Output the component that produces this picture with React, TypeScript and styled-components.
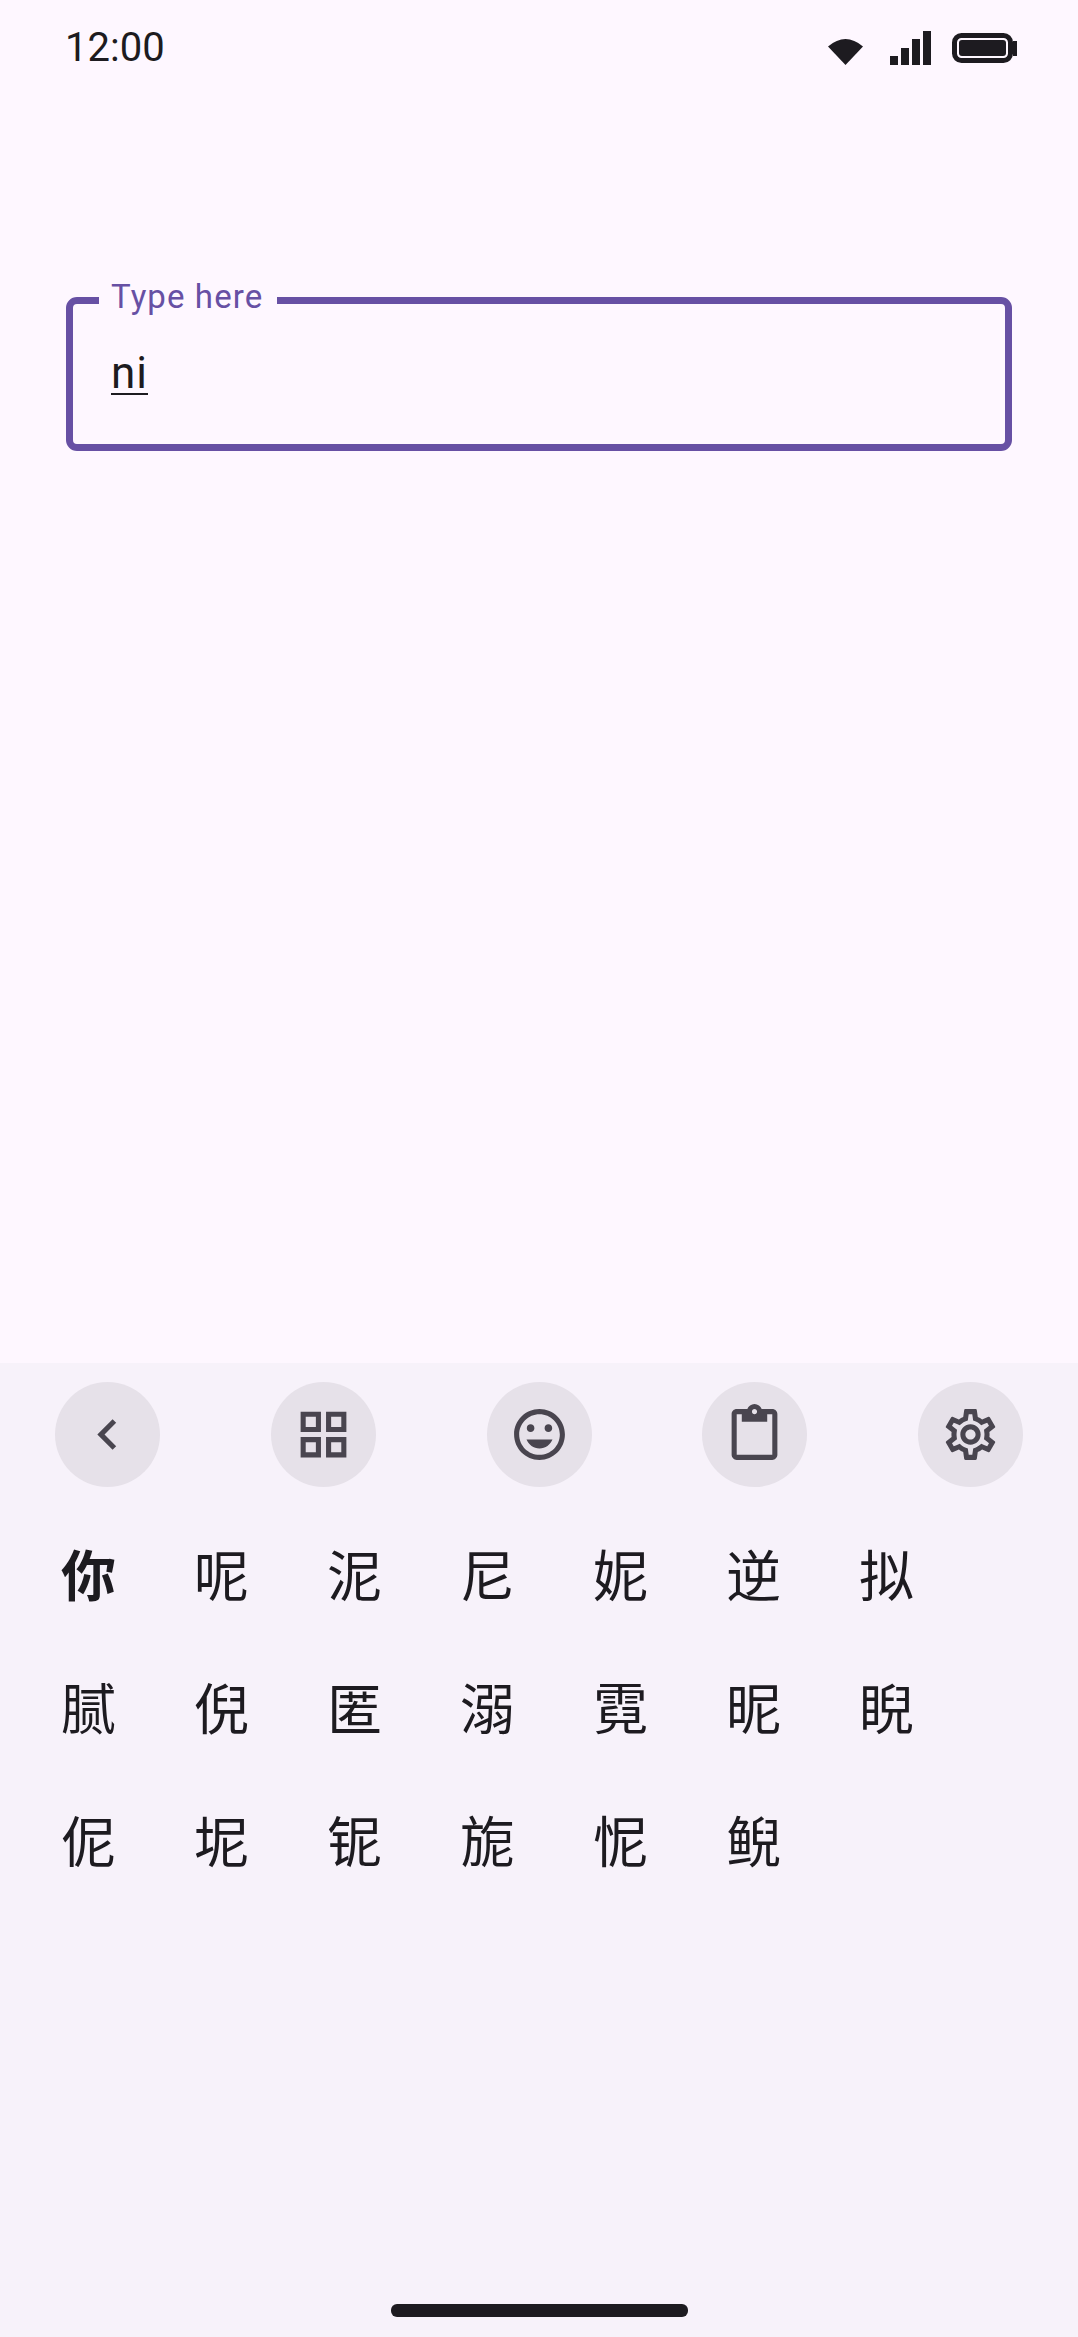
import React from "react";
import styled, { createGlobalStyle } from "styled-components";

const GlobalStyle = createGlobalStyle`
  html, body {
    margin: 0;
    padding: 0;
    background: #fef7ff;
  }
  * {
    box-sizing: border-box;
  }
`;

const Screen = styled.div`
  width: 1078px;
  height: 2337px;
  display: flex;
  flex-direction: column;
  background: #fef7ff;
  color: #1d1b20;
  font-family: Roboto, "Noto Sans CJK SC", sans-serif;
  overflow: hidden;
`;

const StatusBar = styled.div`
  height: 95px;
  padding: 0 61px 0 65px;
  display: flex;
  align-items: center;
  justify-content: space-between;
`;

const Clock = styled.span`
  font-size: 40px;
  line-height: 46px;
`;

const StatusIcons = styled.div`
  display: flex;
  align-items: center;
  color: #1d1b20;

  svg {
    display: block;
    fill: currentColor;
  }
`;

const WifiIcon = styled.svg`
  margin-right: 27px;
`;

const SignalIcon = styled.svg`
  margin-right: 21px;
`;

const Main = styled.main`
  flex: 1;
  padding: 182px 66px 0;
`;

const Field = styled.fieldset`
  width: 946px;
  height: 174px;
  margin: 0;
  padding: 0;
  border: 7px solid #6750a4;
  border-radius: 11px;
`;

const Label = styled.legend`
  margin-left: 26px;
  padding: 0 14px 6px 12px;
  color: #6750a4;
  font-size: 33px;
  line-height: 40px;
  letter-spacing: 1.1px;
`;

const Composing = styled.span`
  display: inline-block;
  margin: 20px 0 0 38px;
  font-size: 44px;
  line-height: 60px;
  letter-spacing: 1px;
  text-decoration: underline;
  text-decoration-thickness: 2px;
  text-underline-offset: 5px;
`;

const Keyboard = styled.section`
  height: 974px;
  display: flex;
  flex-direction: column;
  background: #f7f2fa;
`;

const Toolbar = styled.div`
  padding: 19px 55px 0;
  display: flex;
  justify-content: space-between;
`;

const RoundButton = styled.button`
  width: 105px;
  height: 105px;
  padding: 0;
  border: none;
  border-radius: 50%;
  display: flex;
  align-items: center;
  justify-content: center;
  background: #e6e1e9;
  color: #49454f;

  svg {
    display: block;
    fill: currentColor;
  }
`;

const Candidates = styled.div`
  margin-top: 18px;
  padding-left: 22px;
  display: grid;
  grid-template-columns: repeat(7, 133px);
  grid-auto-rows: 133px;
`;

const Candidate = styled.div<{ $first?: boolean }>`
  display: flex;
  align-items: center;
  justify-content: center;
  font-family: "Noto Sans CJK SC", sans-serif;
  font-size: 55px;
  font-weight: ${({ $first }) => ($first ? 700 : 400)};
  color: #1d1b20;
`;

const HomeBar = styled.div`
  align-self: center;
  width: 297px;
  height: 13px;
  margin-top: auto;
  margin-bottom: 20px;
  border-radius: 6px;
  background: #1d1b20;
`;

const candidates = [
  "你", "呢", "泥", "尼", "妮", "逆", "拟",
  "腻", "倪", "匿", "溺", "霓", "昵", "睨",
  "伲", "坭", "铌", "旎", "怩", "鲵",
];

const toolbarIcons = [
  "M15.41 7.41 14 6l-6 6 6 6 1.41-1.41L10.83 12z",
  "M3 3v8h8V3H3zm6 6H5V5h4v4zm-6 4v8h8v-8H3zm6 6H5v-4h4v4zm4-16v8h8V3h-8zm6 6h-4V5h4v4zm-6 4v8h8v-8h-8zm6 6h-4v-4h4v4z",
  "M11.99 2C6.47 2 2 6.48 2 12s4.47 10 9.99 10C17.52 22 22 17.52 22 12S17.52 2 11.99 2zM12 20c-4.42 0-8-3.58-8-8s3.58-8 8-8 8 3.58 8 8-3.58 8-8 8zm3.5-9c.83 0 1.5-.67 1.5-1.5S16.33 8 15.5 8 14 8.67 14 9.5s.67 1.5 1.5 1.5zm-7 0c.83 0 1.5-.67 1.5-1.5S9.33 8 8.5 8 7 8.67 7 9.5 7.67 11 8.5 11zm3.5 6.5c2.33 0 4.31-1.46 5.11-3.5H6.89c.8 2.04 2.78 3.5 5.11 3.5z",
  "M19 2h-4.18C14.4.84 13.3 0 12 0S9.6.84 9.18 2H5c-1.1 0-2 .9-2 2v16c0 1.1.9 2 2 2h14c1.1 0 2-.9 2-2V4c0-1.1-.9-2-2-2zm-7 0c.55 0 1 .45 1 1s-.45 1-1 1-1-.45-1-1 .45-1 1-1zm7 18H5V4h2v3h10V4h2v16z",
  "M19.43 12.98c.04-.32.07-.64.07-.98 0-.34-.03-.66-.07-.98l2.11-1.65c.19-.15.24-.42.12-.64l-2-3.46c-.09-.16-.26-.25-.44-.25-.06 0-.12.01-.17.03l-2.49 1c-.52-.4-1.08-.73-1.69-.98l-.38-2.65C14.46 2.18 14.25 2 14 2h-4c-.25 0-.46.18-.49.42l-.38 2.65c-.61.25-1.17.59-1.69.98l-2.49-1c-.06-.02-.12-.03-.18-.03-.17 0-.34.09-.43.25l-2 3.46c-.13.22-.07.49.12.64l2.11 1.65c-.04.32-.07.65-.07.98 0 .33.03.66.07.98l-2.11 1.65c-.19.15-.24.42-.12.64l2 3.46c.09.16.26.25.44.25.06 0 .12-.01.17-.03l2.49-1c.52.4 1.08.73 1.69.98l.38 2.65c.03.24.24.42.49.42h4c.25 0 .46-.18.49-.42l.38-2.65c.61-.25 1.17-.59 1.69-.98l2.49 1c.06.02.12.03.18.03.17 0 .34-.09.43-.25l2-3.46c.12-.22.07-.49-.12-.64l-2.11-1.65zm-1.98-1.71c.04.31.05.52.05.73 0 .21-.02.43-.05.73l-.14 1.13.89.7 1.08.84-.7 1.21-1.27-.51-1.04-.42-.9.68c-.43.32-.84.56-1.25.73l-1.06.43-.16 1.13-.2 1.35h-1.4l-.19-1.35-.16-1.13-1.06-.43c-.43-.18-.83-.41-1.23-.71l-.91-.7-1.06.43-1.27.51-.7-1.21 1.08-.84.89-.7-.14-1.13c-.03-.31-.05-.54-.05-.74s.02-.43.05-.73l.14-1.13-.89-.7-1.08-.84.7-1.21 1.27.51 1.04.42.9-.68c.43-.32.84-.56 1.25-.73l1.06-.43.16-1.13.2-1.35h1.39l.19 1.35.16 1.13 1.06.43c.43.18.83.41 1.23.71l.91.7 1.06-.43 1.27-.51.7 1.21-1.07.85-.89.7.14 1.13zM12 8c-2.21 0-4 1.79-4 4s1.79 4 4 4 4-1.79 4-4-1.79-4-4-4zm0 6c-1.1 0-2-.9-2-2s.9-2 2-2 2 .9 2 2-.9 2-2 2z",
];

export default function App() {
  return (
    <Screen>
      <GlobalStyle />
      <StatusBar>
        <Clock>12:00</Clock>
        <StatusIcons>
          <WifiIcon width="35" height="34" viewBox="0 0 35 34">
            <path d="M0 15.5Q17.5 .5 35 15.5L17.5 34Z" />
          </WifiIcon>
          <SignalIcon width="41" height="34" viewBox="0 0 41 34">
            <rect x="0" y="25" width="8" height="9" />
            <rect x="11" y="17" width="8" height="17" />
            <rect x="22" y="8" width="8" height="26" />
            <rect x="33" y="0" width="8" height="34" />
          </SignalIcon>
          <svg width="65" height="30" viewBox="0 0 65 30">
            <rect x="2.5" y="2.5" width="56" height="25" rx="7" fill="none" stroke="currentColor" strokeWidth="5" />
            <rect x="7" y="7" width="47" height="16" rx="3" />
            <rect x="61" y="8" width="4" height="15" />
          </svg>
        </StatusIcons>
      </StatusBar>

      <Main>
        <Field>
          <Label>Type here</Label>
          <Composing>ni</Composing>
        </Field>
      </Main>

      <Keyboard>
        <Toolbar>
          {toolbarIcons.map((d) => (
            <RoundButton key={d}>
              <svg width="61" height="61" viewBox="0 0 24 24">
                <path d={d} />
              </svg>
            </RoundButton>
          ))}
        </Toolbar>
        <Candidates>
          {candidates.map((c, i) => (
            <Candidate key={c} $first={i === 0}>
              {c}
            </Candidate>
          ))}
        </Candidates>
        <HomeBar />
      </Keyboard>
    </Screen>
  );
}
